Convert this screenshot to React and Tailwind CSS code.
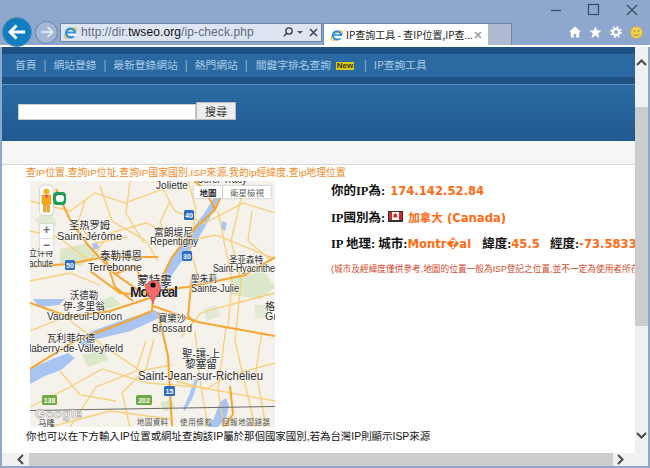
import React from 'react';

const NAV = ['首頁', '網站登錄', '最新登錄網站', '熱門網站'];

const IeLogo = ({ size = 16 }) => (
  <svg width={size} height={size} viewBox="0 0 16 16" fill="none" className="shrink-0">
    <ellipse cx="8" cy="8.500" rx="7.600" ry="3.200" transform="rotate(-38 8 8.500)" stroke="#f2c02c" strokeWidth="1.400" />
    <circle cx="8" cy="8.500" r="4.700" stroke="#2c8ee0" strokeWidth="2.400" />
    <path d="M3.500 8h9" stroke="#2c8ee0" strokeWidth="1.800" />
    <path d="M8 9.200h6v2.600H8z" fill="#fff" />
  </svg>
);

const Chevron = ({ d }) => (
  <svg width="11" height="11" viewBox="0 0 11 11" fill="none">
    <path d={d} stroke="#4a4a4a" strokeWidth="2" strokeLinejoin="miter" />
  </svg>
);

const Shield = ({ x, y, w = 10, label, color = '#2a6cc4' }) => (
  <g>
    <rect x={x} y={y} width={w} height="10" rx="1.500" fill={color} />
    <text x={x + w / 2} y={y + 8} fontSize="7" fontWeight="700" fill="#fff" textAnchor="middle" fontFamily="Liberation Sans">{label}</text>
  </g>
);

const LABELS = [
  ['Joliette', 126, 8, 10.5, 32],
  ['Sorel-Tracy', 167, 2, 10.5, 50],
  ['圣热罗姆', 39, 48, 10.5, 41],
  ['Saint-Jérôme', 27, 59, 11, 65],
  ['富朗堤尼', 124, 55, 10, 39],
  ['Repentigny', 120, 64, 11, 48],
  ['圣亚森特', 199, 82, 9, 34],
  ['Saint-Hyacinthe', 183, 91, 10, 62],
  ['泰勒博恩', 70, 79, 11, 42],
  ['Terrebonne', 58, 90, 11, 54],
  ['聖朱莉', 161, 101, 9, 26],
  ['Sainte-Julie', 161, 111, 10, 48],
  ['蒙特婁', 107, 104, 12, 35],
  ['沃德勒', 40, 118, 10, 28],
  ['伊-多里翁', 33, 129, 10, 42],
  ['Vaudreuil-Dorion', 17, 139, 10.5, 75],
  ['寶樂沙', 128, 141, 10, 28],
  ['Brossard', 122, 151, 10.5, 40],
  ['瓦利菲尔德', 17, 161, 10, 48],
  ['laberry-de-Valleyfield', -1, 171, 10.5, 94],
  ['聖-讓-上', 152, 177, 11, 38],
  ['黎塞留', 155, 187, 11, 32],
  ['Saint-Jean-sur-Richelieu', 108, 199, 12, 125],
  ['格', 235, 129, 10, 10],
  ['Gra', 235, 139, 10.5, 18],
  ['立许特', -1, 75, 9, 24],
  ['achute', -1, 86, 10, 24],
  ['马隆', 8, 245, 8, 17],
];

const MapDrawing = () => (
  <svg width="245" height="246" viewBox="0 0 245 246" className="block">
    <rect width="245" height="246" fill="#f5f2ec" />
    {/* parks */}
    <g fill="#dbe7c9">
      <path d="M30 68l28-6 10 12-18 11-20-3z" />
      <path d="M200 98l34-8 11 16-14 12-30-4z" />
      <path d="M5 38l16-8 6 14-12 9z" opacity=".7" />
      <path d="M64 122l18-7 10 9-24 6z" />
      <path d="M52 174l22-5 4 10-20 7z" />
      <path d="M130 222l12-4 3 9-11 4z" />
      <path d="M172 128l14-4 5 11-14 5z" opacity=".7" />
      <path d="M224 124l14 0 4 12-16 2z" opacity=".7" />
    </g>
    {/* water */}
    <g fill="#a7c4f2">
      <path d="M189 17l-9 20-12 21-12 16-12 17-8 14-8 12-4-2 6-14 8-18 10-14 12-18 15-20 10-16z" />
      <path d="M0 188l20-9 18-7 7 5-14 12-16 6-15 8z" />
      <path d="M50 163l10-12 30-11 35-11 6 7-30 14-34 8-10 8z" />
      <path d="M3 118h32l-6 6-20 2z" />
      <path d="M190 221l6-4 3 8-3 12-8 9h-10l6-9z" />
      <path d="M165 198l3 1-5 17-8 14-2-2 6-14z" />
      <path d="M62 62l5 0 3 5-7 2z" />
      <path d="M192 40l5 2-2 8-4-2z" />
    </g>
    {/* yellow arterial roads */}
    <g fill="none" stroke="#f8cf78" strokeWidth="1.300">
      <path d="M0 20l40 10 25-18 30 10 38-14 12 22 30 12 38-20 32 10" />
      <path d="M70 5l12 35 34 20 12 20" />
      <path d="M158 0l8 28-6 40 12 40" />
      <path d="M215 0l-14 60 10 40-6 60 20 86" />
      <path d="M0 50l28 6 32 24 20-28 36-10 40 18 30-6 59 24" />
      <path d="M100 0l-4 32 18 30" />
      <path d="M188 30l14 70-4 46" />
      <path d="M0 150l35-14 40 30 36 24 30-6" />
      <path d="M0 226l40-20 32-18 46 14 50 4 77 14" />
      <path d="M40 246l26-40 40-16 10-30" />
      <path d="M100 246l-8-34 24-24 8-30" />
      <path d="M165 150l5 50 8 46" />
      <path d="M196 146l-8 62 6 38" />
      <path d="M245 182l-45 12-24 14-30-8" />
      <path d="M245 112l-46 12-28 8-20 24" />
      <path d="M0 100l40-8 30 12" />
      <path d="M232 150l-6 40 10 56" />
      <path d="M20 246l60-16 60 8" />
      <path d="M55 20l-8 24 20 18 30-6" />
      <path d="M222 30l-4 30 24 20" />
      <path d="M140 20l-10 22 8 14" />
      <path d="M30 190l20 24 36 6" />
    </g>
    {/* orange highways */}
    <g fill="none" stroke="#f7a52c" strokeWidth="2">
      <path d="M26 8l14 31 18 25 27 29 23 16 15 6" />
      <path d="M123 115l19-39 24-30 19-17 10-23" />
      <path d="M164 0l8 6 10 16 3 7" />
      <path d="M-2 86l40-3 37-7 53 0" />
      <path d="M0 188l45-28 50-19 27-11 1-15" />
      <path d="M123 125l45 16 27 5 50 9" />
      <path d="M128 131l10 44 4 70" />
      <path d="M123 110l35-4 57-12 30-18" />
      <path d="M85 93l20-8 10 20 8 10" />
      <path d="M60 90l30 22 33 3" />
      <path d="M75 76l10 30 18 14" />
      <path d="M0 122l40 14 40-6 43-14" />
      <path d="M162 95l-4 40 6 6" />
      <path d="M200 205l3 28-8 12" />
    </g>
    <line x1="0" y1="229.500" x2="245" y2="225.500" stroke="#6b6b6b" strokeWidth="1" />
    <g fontFamily="Liberation Sans, Noto Sans CJK SC, sans-serif" fill="#2e2e2e" stroke="#fff" strokeOpacity=".75" strokeWidth="1.200" paintOrder="stroke">
      {LABELS.map(([t, x, y, s, w]) => (
        <text key={t} x={x} y={y} fontSize={s} textLength={w} lengthAdjust="spacingAndGlyphs">{t}</text>
      ))}
      <text x="100" y="116" fontSize="14" fontWeight="700" fill="#222" textLength="48">Montréal</text>
    </g>
    <Shield x={154} y={29} label="40" />
    <Shield x={152} y={70} label="30" />
    <Shield x={35} y={79} label="50" />
    <Shield x={134} y={205} w={11} label="15" />
    <Shield x={12} y={214} w={15} label="138" color="#6fa845" />
    <Shield x={106} y={214} w={16} label="202" color="#6fa845" />
    <text x="5" y="237" fontSize="13" fontWeight="700" fontFamily="Liberation Sans" fill="#f4f4f4" stroke="#9a9a9a" strokeWidth=".5" textLength="47">Google</text>
    <g fontFamily="Noto Sans CJK TC, sans-serif" fontSize="7.500" fill="#555">
      <text x="107" y="244" textLength="31">地圖資料</text>
      <text x="150" y="244" textLength="32">使用條款</text>
      <text x="192" y="244" textLength="48">回報地圖錯誤</text>
    </g>
    {/* marker */}
    <path d="M123 123c-2-8-7.500-11-7.500-16a7.500 7.500 0 0 1 15 0c0 5-5.500 8-7.500 16z" fill="#f4696a" stroke="#b84a4a" strokeWidth=".5" />
    <circle cx="123" cy="104" r="2.600" fill="#111" />
  </svg>
);

const MapBlock = () => (
  <div className="relative w-[245px] h-[246px] shrink-0 overflow-hidden">
    <MapDrawing />
    {/* pegman */}
    <div className="absolute left-[10px] top-[5px] w-[13px] h-[29px] bg-white rounded-sm shadow-[0_0_2px_#999] flex items-center justify-center">
      <svg width="11" height="25" viewBox="0 0 11 25">
        <circle cx="5.500" cy="3.500" r="3" fill="#f4b41a" />
        <path d="M1 7h9v9H8.500v8H6V17H5v7H2.500v-8H1z" fill="#f4a81a" stroke="#c07f10" strokeWidth=".4" />
        <path d="M3.500 7h4L5.500 11z" fill="#e0505a" />
      </svg>
    </div>
    <div className="absolute left-[23px] top-[11px] w-[13px] h-[13px] bg-[#1f9b55] rounded-sm flex items-center justify-center">
      <div className="w-[8px] h-[7px] bg-white rounded-[3px]" />
    </div>
    {/* zoom */}
    <div className="absolute left-[10px] top-[43px] w-[13px] h-[27px] bg-white shadow-[0_0_2px_#bbb] flex flex-col items-center text-[#666] text-[12px] leading-[13px] font-['Liberation_Sans',sans-serif]">
      <span className="h-[14px] font-bold">+</span>
      <span className="h-[13px] font-bold border-t border-[#ddd] w-full text-center">−</span>
    </div>
    {/* map type */}
    <div className="absolute left-[164px] top-[5px] w-[77px] h-[12px] flex bg-white shadow-[0_0_2px_#aaa] text-[8.500px] leading-[12px] font-['Noto_Sans_CJK_TC',sans-serif]">
      <span className="w-[29px] text-center text-black font-medium border-r border-[#ccc]">地圖</span>
      <span className="flex-1 text-center text-[#666]">衛星檢視</span>
    </div>
  </div>
);

const Flag = () => (
  <svg width="15" height="11" viewBox="0 0 15 11" className="inline-block align-[0px] ml-[3px] mr-[5px]">
    <rect width="15" height="11" fill="#333" />
    <rect x="1" y="1" width="13" height="8" fill="#fff" />
    <rect x="1" y="1" width="3" height="8" fill="#d8232a" />
    <rect x="11" y="1" width="3" height="8" fill="#d8232a" />
    <path d="M7.500 2l.8 1.500 1-.3-.4 1.800.8.300-1.300 1.200H6.100L4.800 5.300l.8-.3-.4-1.800 1 .3z" fill="#d8232a" />
  </svg>
);

export default function App() {
  const val = "font-['DejaVu_Sans','Noto_Sans_CJK_TC',sans-serif] font-bold text-[#ff6a13] text-[11.600px]";
  const lab = "font-['Liberation_Serif','Noto_Sans_CJK_TC',serif] font-bold text-[12.500px] text-[#111]";
  return (
    <div className="w-[650px] h-[468px] overflow-hidden flex flex-col bg-[#8ea7cd] font-['Liberation_Sans','Noto_Sans_CJK_TC',sans-serif]">
      {/* browser chrome */}
      <div className="h-[47px] shrink-0 flex flex-col border-b-2 border-white">
        <div className="h-[19px] flex items-center justify-end">
          <svg width="98" height="14" viewBox="0 0 98 14" fill="none" stroke="#3a4a5e" className="mr-[1px]">
            <path d="M0 7.500h10" strokeWidth="1.200" />
            <rect x="37.500" y="1.500" width="10" height="10" strokeWidth="1.200" />
            <path d="M76 2l10 10M86 2L76 12" strokeWidth="1.200" />
          </svg>
        </div>
        <div className="h-[26px] flex items-center relative">
          <div className="ml-[2px] w-[30px] h-[30px] rounded-full bg-[#0f7fc0] border border-[#5a8ab0] flex items-center justify-center shrink-0">
            <svg width="18" height="16" viewBox="0 0 18 16" fill="none" stroke="#fff" strokeWidth="3">
              <path d="M8.500 1.500L2 8l6.500 6.500M2.500 8H17" />
            </svg>
          </div>
          <div className="ml-[3px] w-[23px] h-[23px] rounded-full bg-[#a3b7d6] border border-[#6d83a6] flex items-center justify-center shrink-0">
            <svg width="14" height="12" viewBox="0 0 14 12" fill="none" stroke="#eef2f8" strokeWidth="1.600">
              <path d="M7.500 1L12.500 6l-5 5M12 6H1" />
            </svg>
          </div>
          <div className="ml-[2px] w-[262px] h-[19px] shrink-0 bg-[#dde5f2] border border-[#6f86a8] flex items-center pl-[2px] text-[12px] text-[#5f6b7d]">
            <IeLogo size={15} />
            <span className="ml-[3px] tracking-[0.1px]">http://dir.<span className="text-[#111]">twseo.org</span>/ip-check.php</span>
            <svg width="10" height="10" viewBox="0 0 10 10" fill="none" stroke="#333" strokeWidth="1.300" className="ml-auto">
              <circle cx="6" cy="4" r="3.200" />
              <path d="M3.600 6.400L.8 9.200" />
            </svg>
            <span className="ml-[4px] mr-[6px] w-0 h-0 border-x-[3px] border-x-transparent border-t-[3px] border-t-[#555]" />
            <svg width="9" height="9" viewBox="0 0 9 9" stroke="#444" strokeWidth="1.500" className="mr-[3px]">
              <path d="M1 1l7 7M8 1L1 8" />
            </svg>
          </div>
          <div className="ml-[1px] w-[165px] h-[22px] mt-[4px] shrink-0 bg-white border-t border-l border-[#6f86a8] flex items-center pl-[6px] text-[10px] text-[#222] font-['Noto_Sans_CJK_TC',sans-serif]">
            <IeLogo size={14} />
            <span className="ml-[2px] whitespace-nowrap">IP查詢工具 - 查IP位置,IP查...</span>
            <svg width="8" height="8" viewBox="0 0 8 8" stroke="#999" strokeWidth="1.600" className="ml-auto mr-[6px] shrink-0">
              <path d="M1 1l6 6M7 1L1 7" />
            </svg>
          </div>
          <div className="w-[24px] h-[22px] mt-[4px] shrink-0 bg-[#b1bbd0] border-t border-r border-[#6f86a8]" />
          <div className="ml-auto mr-[7px] flex items-center gap-[8px]">
            <svg width="12" height="12" viewBox="0 0 12 12" fill="#fff"><path d="M6 .5L0 6h1.800v5.500h3V8h2.400v3.500h3V6H12z" /></svg>
            <svg width="13" height="13" viewBox="0 0 13 13" fill="#fff"><path d="M6.500.5l1.800 4h4.200L9.200 7.400l1.200 4.800-3.900-2.600-3.900 2.600 1.200-4.800L.5 4.500h4.200z" /></svg>
            <svg width="12" height="12" viewBox="0 0 12 12" fill="none" stroke="#fff"><circle cx="6" cy="6" r="3" strokeWidth="2" /><circle cx="6" cy="6" r="5" strokeWidth="1.500" strokeDasharray="2 1.930" /></svg>
            <svg width="13" height="13" viewBox="0 0 13 13"><circle cx="6.500" cy="6.500" r="6" fill="#f3d250" stroke="#c7a530" strokeWidth=".6" /><circle cx="4.500" cy="5" r=".8" fill="#8a6d10" /><circle cx="8.500" cy="5" r=".8" fill="#8a6d10" /><path d="M3.500 8c1.500 2 4.500 2 6 0" fill="none" stroke="#8a6d10" strokeWidth=".8" /></svg>
          </div>
        </div>
      </div>

      {/* viewport */}
      <div className="flex-1 min-h-0 flex flex-col px-[2px] pb-[2px]">
        <div className="flex-1 min-h-0 flex">
          <div className="flex-1 min-w-0 overflow-hidden bg-white">
            <div className="h-[37px] bg-[#2a69a1] border-y-[7px] border-[#1c5284] flex items-center pl-[13px] text-[10.750px] text-[#a9cae6] font-['Noto_Sans_CJK_TC',sans-serif] whitespace-nowrap">
              {NAV.map(n => (
                <React.Fragment key={n}>
                  <span>{n}</span>
                  <span className="mx-[7px]">|</span>
                </React.Fragment>
              ))}
              <span className="ml-[1px]">關鍵字排名查詢</span>
              <span className="ml-[5px] w-[18px] bg-[#d8c818] text-[#3a3410] text-[8px] leading-[8px] font-bold text-center font-['Liberation_Sans',sans-serif]">New</span>
              <span className="ml-[10px] mr-[7px]">|</span>
              <span>IP查詢工具</span>
            </div>
            <div className="h-[57px] border-t border-[#5e8fb8] bg-gradient-to-b from-[#2c6ba3] to-[#1f5a90] pt-[17px] pl-[16px] flex items-start">
              <div className="w-[178px] h-[16px] mt-[2px] bg-white border border-[#ccc]" />
              <div className="w-[40px] h-[18px] bg-[#ededed] border border-[#bbb] text-[11px] leading-[16px] text-center text-[#333] font-['Noto_Sans_CJK_TC',sans-serif]">搜尋</div>
            </div>
            <div className="h-[24px] bg-[#f6f6f6] border-b border-[#d8d8d8]" />
            <div className="pl-[24px] pt-[1px] h-[16px] text-[9.900px] leading-[14px] text-[#f08a1d] whitespace-nowrap">
              查IP位置,查詢IP位址,查詢IP國家國別,ISP來源,我的ip經緯度,查ip地理位置
            </div>
            <div className="flex pl-[28px]">
              <MapBlock />
              <div className="ml-[56px] min-w-0 flex-1 whitespace-nowrap overflow-hidden pt-[1px]">
                <div className="h-[27px] leading-[16px]">
                  <span className={lab}>你的IP為:</span><span className={`${val} ml-[5px]`}>174.142.52.84</span>
                </div>
                <div className="h-[26px] leading-[16px]">
                  <span className={lab}>IP國別為:</span><Flag /><span className={val}>加拿大 (Canada)</span>
                </div>
                <div className="h-[28px] leading-[16px]">
                  <span className={lab}>IP 地理: 城市:</span><span className={val}>Montr�al</span>
                  <span className={`${lab} ml-[11px]`}>緯度:</span><span className={val}>45.5</span>
                  <span className={`${lab} ml-[10px]`}>經度:</span><span className={val}>-73.5833</span>
                </div>
                <div className="text-[8.700px] leading-[12px] text-[#d2492c]">
                  (城市及經緯度僅供參考,地圖的位置一般為ISP登記之位置,並不一定為使用者所在地點)
                </div>
              </div>
            </div>
            <div className="pl-[24px] pt-[2px] text-[10.450px] leading-[15px] text-[#111] whitespace-nowrap">
              你也可以在下方輸入IP位置或網址查詢該IP屬於那個國家國別,若為台灣IP則顯示ISP來源
            </div>
          </div>
          {/* vertical scrollbar */}
          <div className="w-[13px] shrink-0 bg-[#f0f0f0] flex flex-col items-center">
            <div className="h-[60px] shrink-0 w-full flex items-start justify-center pt-[10px]">
              <Chevron d="M1 8l4.500-4.500L10 8" />
            </div>
            <div className="h-[219px] shrink-0 w-full bg-[#cdcdcd]" />
            <div className="flex-1 w-full flex items-end justify-center pb-[12px]">
              <Chevron d="M1 3l4.500 4.500L10 3" />
            </div>
          </div>
        </div>
        {/* horizontal scrollbar */}
        <div className="h-[13px] shrink-0 bg-[#f0f0f0] flex items-center">
          <div className="w-[27px] shrink-0 flex justify-end pr-[3px]"><Chevron d="M8 1L3.500 5.500 8 10" /></div>
          <div className="w-[584px] h-full shrink-0 bg-[#cdcdcd]" />
          <div className="ml-[2px]"><Chevron d="M3 1l4.500 4.500L3 10" /></div>
        </div>
      </div>
    </div>
  );
}
